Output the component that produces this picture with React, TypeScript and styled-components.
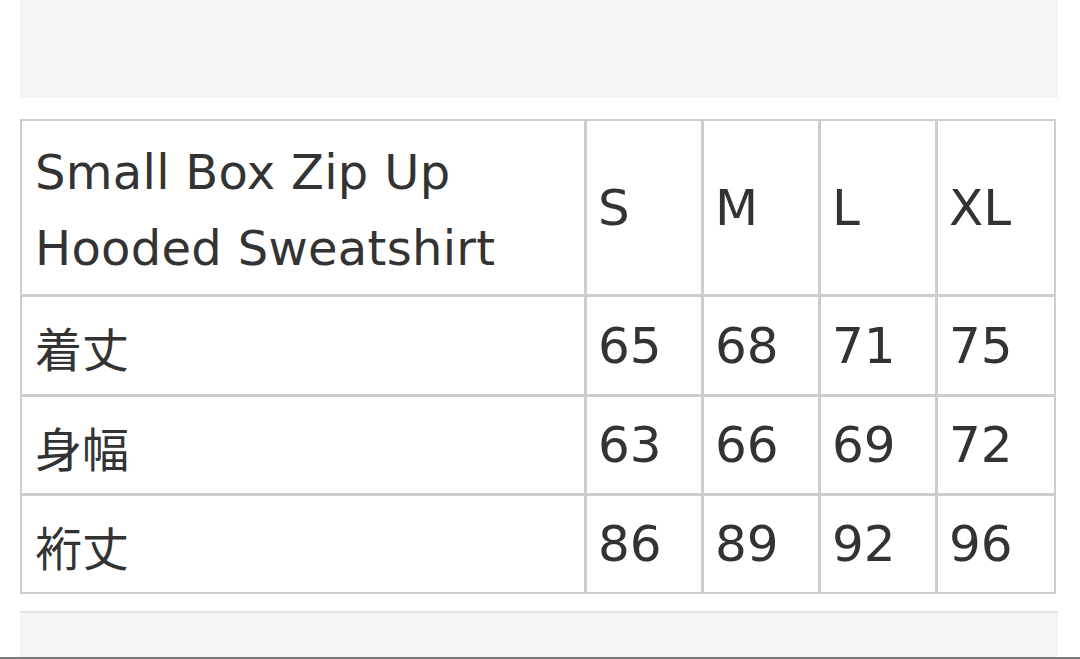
import React from "react";
import styled, { createGlobalStyle } from "styled-components";

const Global = createGlobalStyle`
  html, body { margin: 0; padding: 0; background: #ffffff; }
  body { font-family: "DejaVu Sans", "Noto Sans CJK JP", sans-serif; }
`;

const Page = styled.div`
  width: 1080px;
  height: 659px;
  display: flex;
  flex-direction: column;
  overflow: hidden;
  background: #ffffff;
`;

const Band = styled.div<{ $h: number; $top?: boolean }>`
  margin: 0 22px 0 20px;
  height: ${(p) => p.$h}px;
  background: #f4f4f4;
  flex: none;
  ${(p) => (p.$top ? "border-top: 2px solid #e4e4e4;" : "")}
`;

const Spacer = styled.div<{ $h: number }>`
  height: ${(p) => p.$h}px;
  flex: none;
`;

const Bottom = styled.div`
  flex: 1;
  display: flex;
  flex-direction: column;
  justify-content: flex-end;
`;

const BaseLine = styled.div`
  height: 2px;
  background: #7a7a7a;
  flex: none;
`;

const Grid = styled.div`
  margin-left: 20px;
  width: 1036px;
  display: grid;
  grid-template-columns: 562px 114px 114px 114px 116px;
  grid-template-rows: 173px 97px 96px 96px;
  gap: 3px;
  padding: 2px;
  background: #cdcdcd;
  box-sizing: border-box;
  flex: none;
`;

const Cell = styled.div<{ $size?: boolean }>`
  background: #ffffff;
  display: flex;
  align-items: center;
  padding-left: ${(p) => (p.$size ? 11 : 13)}px;
  color: #333333;
  font-family: "DejaVu Sans", "Noto Sans CJK JP", sans-serif;
  font-size: ${(p) => (p.$size ? 50 : 48)}px;
  line-height: 1;
  white-space: nowrap;
`;

const Title = styled.div`
  line-height: 76px;
  margin-top: 4px;
  letter-spacing: 0.3px;
`;

const Jp = styled.span`
  font-family: "Noto Sans CJK JP", sans-serif;
  font-size: 47px;
  font-weight: 400;
  margin-top: 2px;
`;

const sizes = ["S", "M", "L", "XL"];
const rows: [string, number[]][] = [
  ["着丈", [65, 68, 71, 75]],
  ["身幅", [63, 66, 69, 72]],
  ["裄丈", [86, 89, 92, 96]],
];

export default function App() {
  return (
    <>
      <Global />
      <Page>
        <Band $h={98} />
        <Spacer $h={21} />
        <Grid>
          <Cell>
            <Title>
              Small Box Zip Up
              <br />
              Hooded Sweatshirt
            </Title>
          </Cell>
          {sizes.map((s) => (
            <Cell key={s} $size>
              {s}
            </Cell>
          ))}
          {rows.map(([label, vals]) => (
            <React.Fragment key={label}>
              <Cell>
                <Jp>{label}</Jp>
              </Cell>
              {vals.map((v, i) => (
                <Cell key={i} $size>
                  {v}
                </Cell>
              ))}
            </React.Fragment>
          ))}
        </Grid>
        <Spacer $h={16} />
        <Bottom>
          <Band $h={44} $top />
          <BaseLine />
        </Bottom>
      </Page>
    </>
  );
}
